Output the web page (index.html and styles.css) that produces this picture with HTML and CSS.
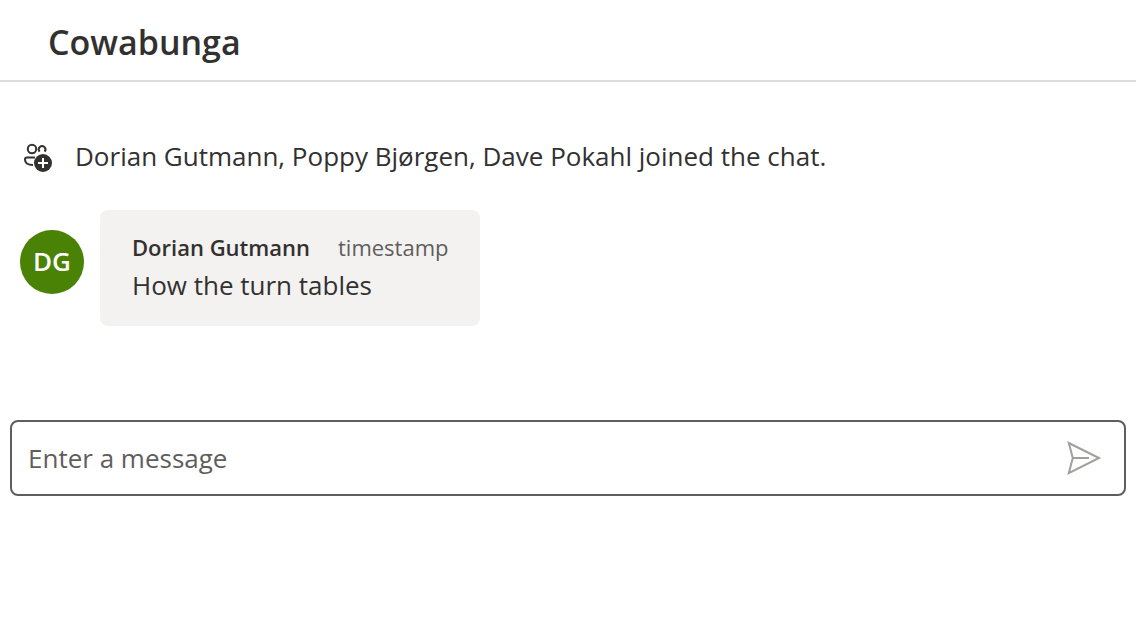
FILE: index.html
```html
<!DOCTYPE html>
<html lang="en">
<head>
<meta charset="utf-8">
<meta name="viewport" content="width=device-width, initial-scale=1">
<title>Cowabunga</title>
<link rel="stylesheet" href="styles.css">
</head>
<body>
<header class="chat-header">
  <h1 class="chat-title">Cowabunga</h1>
</header>
<main class="chat">
  <section class="thread" aria-label="Messages">
    <div class="system-message">
      <svg class="people-icon" viewBox="0 0 30 30" aria-hidden="true">
        <g fill="none" stroke="#323130" stroke-width="2">
          <circle cx="9" cy="6" r="4.2"/>
          <path d="M16.6 8.6a3.3 3.3 0 1 1 5 0"/>
          <path d="M12 14.5H4Q2 14.5 2 16.5C2 20 4.5 22 10 22"/>
        </g>
        <circle cx="20" cy="20" r="9" fill="#323130"/>
        <path d="M20 15v10M15 20h10" stroke="#fff" stroke-width="2"/>
      </svg>
      <p class="system-text">Dorian Gutmann, Poppy Bjørgen, Dave Pokahl joined the chat.</p>
    </div>
    <article class="message">
      <div class="avatar" aria-hidden="true">DG</div>
      <div class="bubble">
        <div class="meta">
          <span class="author">Dorian Gutmann</span>
          <span class="time">timestamp</span>
        </div>
        <p class="body">How the turn tables</p>
      </div>
    </article>
  </section>
  <form class="composer">
    <input class="field" type="text" aria-label="Enter a message" placeholder="Enter a message">
    <button class="send" type="button" aria-label="Send message">
      <svg class="send-icon" viewBox="0 0 36 36" aria-hidden="true">
        <path d="M2.8 3L33 18 2.8 33.2 6.8 18zM6.8 18H23" fill="none" stroke="#a19f9d" stroke-width="2"/>
      </svg>
    </button>
  </form>
</main>
</body>
</html>
```
FILE: styles.css
```css
* { box-sizing: border-box; }
body {
  margin: 0;
  background: #fff;
  color: #323130;
  font-family: "Segoe UI", "Open Sans", "Noto Sans", sans-serif;
  font-size: 26px;
}
h1, p { margin: 0; }
.chat-header {
  padding: 18px 48px 14px;
  border-bottom: 2px solid #dcdcdc;
}
.chat-title {
  font-size: 34px;
  font-weight: 600;
  line-height: 48px;
}
.chat { padding: 54px 10px 0; }
.system-message {
  display: flex;
  align-items: center;
  gap: 22px;
  padding-left: 13px;
}
.people-icon { width: 30px; height: 30px; flex: none; margin-top: 2px; }
.system-text { line-height: 40px; }
.message {
  display: flex;
  align-items: flex-start;
  gap: 16px;
  padding: 34px 10px 0;
}
.people-icon { margin-top: 4px; }
.avatar {
  display: grid;
  place-items: center;
  flex: none;
  width: 64px;
  height: 64px;
  margin-top: 20px;
  padding-bottom: 2px;
  border-radius: 50%;
  background: #498205;
  color: #fff;
  font-weight: 600;
}
.bubble {
  padding: 20px 32px;
  border-radius: 8px;
  background: #f3f2f1;
}
.meta {
  display: flex;
  gap: 28px;
  font-size: 22px;
  line-height: 34px;
}
.author { font-weight: 600; }
.time { color: #605e5c; }
.body { line-height: 42px; }
.composer {
  display: flex;
  align-items: center;
  margin-top: 94px;
  padding: 0 22px 0 16px;
  border: 2px solid #605e5c;
  border-radius: 8px;
}
.field {
  flex: 1;
  min-width: 0;
  height: 72px;
  padding: 0;
  border: 0;
  outline: 0;
  background: none;
  color: inherit;
  font: inherit;
}
.field::placeholder { color: #605e5c; opacity: 1; }
.send {
  display: grid;
  padding: 0;
  border: 0;
  background: none;
}
.send-icon { width: 36px; height: 36px; }
```
